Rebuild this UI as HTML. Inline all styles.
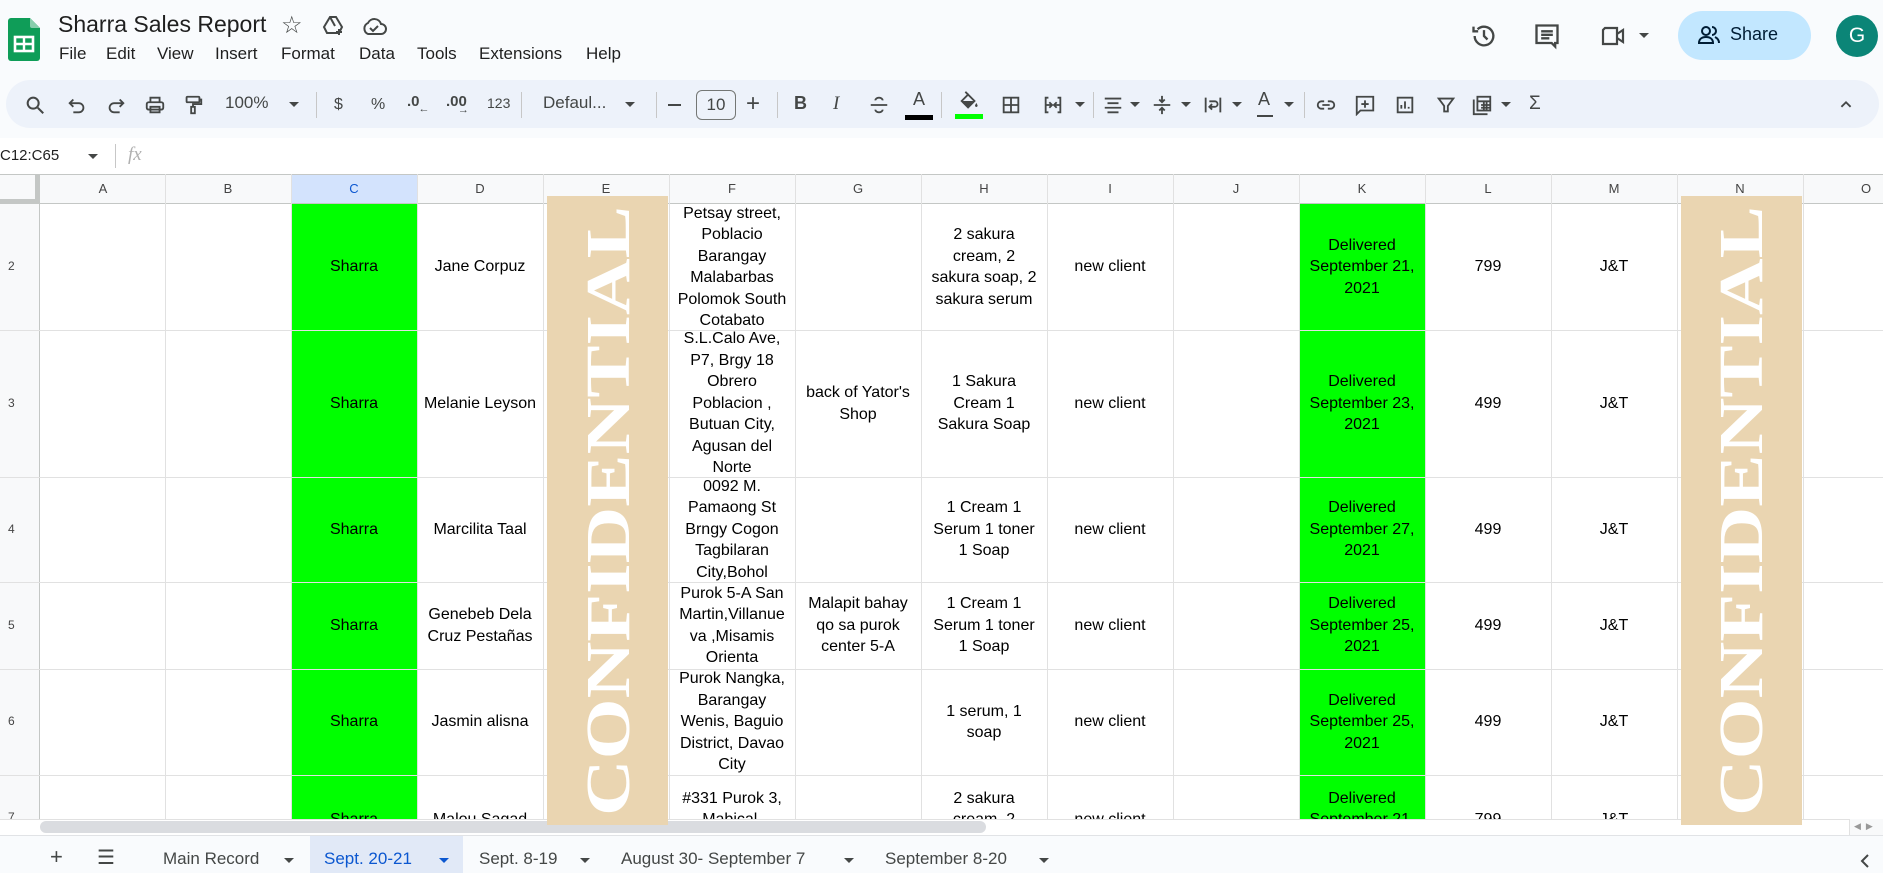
<!DOCTYPE html>
<html><head><meta charset="utf-8"><style>
*{margin:0;padding:0;box-sizing:border-box}
body{width:1883px;height:873px;overflow:hidden;background:#f9fbfd;font-family:"Liberation Sans",Arial,sans-serif;color:#1f1f1f;position:relative}
.a{position:absolute}
.t{position:absolute;white-space:nowrap}
.menu span{position:absolute;top:44px;font-size:17px;color:#1f1f1f}
.ic{position:absolute;top:94px;width:22px;height:22px}
.tb{position:absolute;top:93px;font-size:16px;color:#444746}
.sep{position:absolute;top:92px;width:1px;height:26px;background:#c7c7c7}
.dd{position:absolute;top:102px;width:0;height:0;border-left:5px solid transparent;border-right:5px solid transparent;border-top:5px solid #444746}
#grid{position:absolute;left:0;top:174px;width:1883px;height:645px;overflow:hidden;background:#fff}
.vl{position:absolute;top:0;width:1px;height:645px;background:#e1e1e1}
.hl{position:absolute;left:0;height:1px;width:1883px;background:#e1e1e1}
.ch{position:absolute;top:0;height:30px;width:126px;text-align:center;font-size:13px;line-height:30px;color:#444}
.c{position:absolute;display:flex;align-items:center;justify-content:center;text-align:center;font-size:16px;line-height:21.5px;color:#000;width:126px;padding:0 6px}
.g{background:#00ff00}
.rn{position:absolute;left:8px;font-size:12px;color:#444}
.tab{position:absolute;top:849px;font-size:17px;color:#444746}
</style></head><body>
<svg class="a" style="left:8px;top:18px" width="32" height="43" viewBox="0 0 32 43"><path d="M3 0h19l10 10v30a3 3 0 0 1-3 3H3a3 3 0 0 1-3-3V3a3 3 0 0 1 3-3z" fill="#0f9d58"/><path d="M22 0l10 10h-8a2 2 0 0 1-2-2z" fill="#87ceac"/><rect x="7" y="19" width="18" height="14" fill="none" stroke="#fff" stroke-width="2.6"/><path d="M7 26h18M16 19v14" stroke="#fff" stroke-width="2.4"/></svg>
<div class="t" style="left:58px;top:11px;font-size:23px;color:#1f1f1f">Sharra Sales Report</div>
<div class="t" style="left:281px;top:11px;font-size:24px;color:#444746">☆</div>
<svg class="a" style="left:321px;top:14px" width="24" height="24" viewBox="0 0 24 24" fill="none" stroke="#444746" stroke-width="2"><path d="M9 3h6l6 10-3 6H6l-3-6z"/><path d="M9 3l5 9"/><path d="M18 15v6M15 18h6"/></svg>
<svg class="a" style="left:361px;top:15px" width="26" height="22" viewBox="0 0 26 22" fill="none" stroke="#444746" stroke-width="2"><path d="M7 19h13a5 5 0 0 0 0-10 7 7 0 0 0-13-1 6 6 0 0 0 0 11z"/><path d="M9 13l3 3 5-5"/></svg>
<div class="menu"><span style="left:59px">File</span><span style="left:106px">Edit</span><span style="left:157px">View</span><span style="left:215px">Insert</span><span style="left:281px">Format</span><span style="left:359px">Data</span><span style="left:417px">Tools</span><span style="left:479px">Extensions</span><span style="left:586px">Help</span></div>
<svg class="a" style="left:1470px;top:22px" width="28" height="28" viewBox="0 0 24 24" fill="none" stroke="#444746" stroke-width="2"><path d="M4 12a8 8 0 1 0 2.5-5.8"/><path d="M3 4v4h4"/><path d="M12 7v5l3 3"/></svg>
<svg class="a" style="left:1533px;top:22px" width="28" height="28" viewBox="0 0 24 24" fill="none" stroke="#444746" stroke-width="2"><path d="M3 3h18v15h-2v3l-3-3H3z"/><path d="M7 8h10M7 11h10M7 14h7"/></svg>
<svg class="a" style="left:1600px;top:24px" width="28" height="24" viewBox="0 0 28 24" fill="none" stroke="#444746" stroke-width="2.2"><path d="M5 4h12v16H3V6z"/><path d="M17 10l6-4v12l-6-4"/></svg>
<div class="dd" style="left:1639px;top:33px"></div>
<div class="a" style="left:1678px;top:11px;width:133px;height:49px;border-radius:25px;background:#c2e7ff"></div>
<svg class="a" style="left:1697px;top:25px" width="24" height="20" viewBox="0 0 24 20" fill="none" stroke="#001d35" stroke-width="2"><circle cx="9" cy="6" r="4"/><path d="M2 18c0-4 3-6 7-6s7 2 7 6z"/><path d="M15 2a4 4 0 0 1 0 8M18 12c2 1 4 3 4 6"/></svg>
<div class="t" style="left:1730px;top:24px;font-size:18px;color:#001d35">Share</div>
<div class="a" style="left:1836px;top:15px;width:42px;height:42px;border-radius:50%;background:#0b8577;color:#fff;font-size:21px;text-align:center;line-height:42px">G</div>
<div class="a" style="left:6px;top:80px;width:1873px;height:48px;border-radius:24px;background:#edf2fa"></div>
<svg class="ic" style="left:24px" viewBox="0 0 24 24" fill="none" stroke="#444746" stroke-width="2.2"><circle cx="10" cy="10" r="6"/><path d="M15 15l6 6"/></svg>
<svg class="ic" style="left:66px" viewBox="0 0 24 24" fill="none" stroke="#444746" stroke-width="2"><path d="M8 6L4 10l4 4"/><path d="M4 10h10a5 5 0 0 1 0 10H8"/></svg>
<svg class="ic" style="left:105px" viewBox="0 0 24 24" fill="none" stroke="#444746" stroke-width="2"><path d="M16 6l4 4-4 4"/><path d="M20 10H10a5 5 0 0 0 0 10h6"/></svg>
<svg class="ic" style="left:144px" viewBox="0 0 24 24" fill="none" stroke="#444746" stroke-width="2"><rect x="3" y="9" width="18" height="8" rx="2"/><path d="M7 9V4h10v5M7 14h10v6H7z"/></svg>
<svg class="ic" style="left:182px" viewBox="0 0 24 24" fill="none" stroke="#444746" stroke-width="2"><rect x="5" y="3" width="14" height="6" rx="1"/><path d="M19 6h2v5h-9v3"/><rect x="10" y="14" width="4" height="7"/></svg>
<div class="tb" style="left:225px;font-size:17px">100%</div><div class="dd" style="left:289px"></div>
<div class="sep" style="left:316px"></div>
<div class="tb" style="left:334px;top:96px">$</div>
<div class="tb" style="left:371px;top:96px">%</div>
<div class="tb" style="left:407px;font-weight:bold;font-size:15px">.0<span style="font-size:11px;position:relative;top:6px;left:-1px">←</span></div>
<div class="tb" style="left:446px;font-weight:bold;font-size:15px">.00<span style="font-size:11px;position:relative;top:7px;left:-9px">→</span></div>
<div class="tb" style="left:487px;font-size:14px;top:95px">123</div>
<div class="sep" style="left:521px"></div>
<div class="tb" style="left:543px;font-size:17px">Defaul...</div><div class="dd" style="left:625px"></div>
<div class="sep" style="left:656px"></div>
<div class="a" style="left:668px;top:104px;width:13px;height:2px;background:#444746"></div>
<div class="a" style="left:696px;top:90px;width:40px;height:30px;border:1px solid #747775;border-radius:6px;text-align:center;line-height:28px;font-size:17px;color:#444746">10</div>
<div class="tb" style="left:746px;font-size:24px;top:90px">+</div>
<div class="sep" style="left:777px"></div>
<div class="tb" style="left:794px;font-weight:bold;font-size:18px">B</div>
<div class="tb" style="left:833px;font-style:italic;font-size:19px;font-family:'Liberation Serif'">I</div>
<svg class="ic" style="left:868px" viewBox="0 0 24 24" fill="none" stroke="#444746" stroke-width="2"><path d="M3 12h18M16 7a4 3 0 0 0-8 0M8 17a4 3 0 0 0 8 0"/></svg>
<div class="tb" style="left:913px;font-size:18px;top:89px">A</div><div class="a" style="left:905px;top:115px;width:28px;height:5px;background:#000"></div>
<div class="sep" style="left:941px"></div>
<svg class="ic" style="left:958px;top:90px" viewBox="0 0 24 24" fill="#444746"><path d="M4 12l7-7 7 7-7 7z" fill="none" stroke="#444746" stroke-width="2"/><path d="M5 12h12l-6 6z"/><path d="M8 2l3 3" stroke="#444746" stroke-width="2"/><path d="M20 14c-1 2-2 3-1 4a1.3 1.3 0 0 0 2 0c1-1 0-2-1-4z"/></svg>
<div class="a" style="left:955px;top:114px;width:28px;height:5px;background:#00ff00"></div>
<svg class="ic" style="left:1000px" viewBox="0 0 24 24" fill="none" stroke="#444746" stroke-width="2"><rect x="4" y="4" width="16" height="16"/><path d="M12 4v16M4 12h16"/></svg>
<svg class="ic" style="left:1042px" viewBox="0 0 24 24" fill="none" stroke="#444746" stroke-width="2"><path d="M7 4H4v16h3M17 4h3v16h-3M4 12h6M20 12h-6M8 9l3 3-3 3M16 9l-3 3 3 3"/></svg><div class="dd" style="left:1075px"></div>
<div class="sep" style="left:1093px"></div>
<svg class="ic" style="left:1102px" viewBox="0 0 24 24" fill="none" stroke="#444746" stroke-width="2"><path d="M3 5h18M6 10h12M3 15h18M6 20h12"/></svg><div class="dd" style="left:1130px"></div>
<svg class="ic" style="left:1151px" viewBox="0 0 24 24" fill="none" stroke="#444746" stroke-width="2"><path d="M3 12h18M12 2v7M9 6l3 3 3-3M12 22v-7M9 18l3-3 3 3"/></svg><div class="dd" style="left:1181px"></div>
<svg class="ic" style="left:1202px" viewBox="0 0 24 24" fill="none" stroke="#444746" stroke-width="2"><path d="M4 4v16M20 4v16M8 8h6a3 3 0 0 1 0 6h-5M11 11l-3 3 3 3"/></svg><div class="dd" style="left:1232px"></div>
<div class="tb" style="left:1258px;font-size:18px;top:89px">A</div><div class="a" style="left:1257px;top:115px;width:16px;height:2px;background:#444746"></div><div class="dd" style="left:1284px"></div>
<div class="sep" style="left:1304px"></div>
<svg class="ic" style="left:1315px" viewBox="0 0 24 24" fill="none" stroke="#444746" stroke-width="2"><path d="M10 8H7a4 4 0 0 0 0 8h3M14 8h3a4 4 0 0 1 0 8h-3M8 12h8"/></svg>
<svg class="ic" style="left:1354px" viewBox="0 0 24 24" fill="none" stroke="#444746" stroke-width="2"><path d="M3 3h18v15H7l-4 4z"/><path d="M12 7v8M8 11h8"/></svg>
<svg class="ic" style="left:1394px" viewBox="0 0 24 24" fill="none" stroke="#444746" stroke-width="2"><rect x="4" y="4" width="16" height="16"/><path d="M8 16v-4M12 16V8M16 16v-2"/></svg>
<svg class="ic" style="left:1435px" viewBox="0 0 24 24" fill="none" stroke="#444746" stroke-width="2"><path d="M4 5h16l-6 8v6h-4v-6z"/></svg>
<svg class="ic" style="left:1471px" viewBox="0 0 24 24" fill="none" stroke="#444746" stroke-width="2"><path d="M3 6v16h15"/><rect x="7" y="3" width="14" height="15"/><path d="M7 8h14M11 12h10M11 15h10M14 8v10M17 8v10"/></svg><div class="dd" style="left:1501px"></div>
<div class="tb" style="left:1529px;font-size:19px;top:93px">Σ</div>
<svg class="ic" style="left:1835px" viewBox="0 0 24 24" fill="none" stroke="#444746" stroke-width="2"><path d="M7 14l5-5 5 5"/></svg>
<div class="a" style="left:0;top:138px;width:1883px;height:36px;background:#fff"></div>
<div class="t" style="left:0;top:147px;font-size:15px;color:#1f1f1f">C12:C65</div>
<div class="dd" style="left:88px;top:154px"></div>
<div class="a" style="left:115px;top:144px;width:1px;height:24px;background:#c7c7c7"></div>
<div class="t" style="left:128px;top:144px;font-size:19px;font-style:italic;color:#b0b0b0;font-family:'Liberation Serif'">fx</div>
<div id="grid">
<div class="a" style="left:0;top:0;width:1883px;height:30px;background:#f8f9fa"></div>
<div class="a" style="left:0;top:0;width:40px;height:645px;background:#f8f9fa"></div>
<div class="a" style="left:291px;top:0;width:126px;height:30px;background:#d3e3fd"></div>
<div class="a" style="left:0;top:0;width:1883px;height:1px;background:#c4c7c5"></div>
<div class="a" style="left:0;top:29px;width:1883px;height:1px;background:#c4c7c5"></div>
<div class="a" style="left:0;top:25px;width:40px;height:5px;background:#c4c7c5"></div>
<div class="a" style="left:35px;top:0;width:5px;height:30px;background:#c4c7c5"></div>
<div class="a" style="left:39px;top:0;width:1px;height:645px;background:#c4c7c5"></div>
<div class="a g" style="left:291px;top:30px;width:126px;height:615px"></div>
<div class="a g" style="left:1299px;top:30px;width:126px;height:615px"></div>
<div class="vl" style="left:165px"></div><div class="vl" style="left:291px"></div><div class="vl" style="left:417px"></div><div class="vl" style="left:543px"></div><div class="vl" style="left:669px"></div><div class="vl" style="left:795px"></div><div class="vl" style="left:921px"></div><div class="vl" style="left:1047px"></div><div class="vl" style="left:1173px"></div><div class="vl" style="left:1299px"></div><div class="vl" style="left:1425px"></div><div class="vl" style="left:1551px"></div><div class="vl" style="left:1677px"></div><div class="vl" style="left:1803px"></div>
<div class="hl" style="top:156px"></div><div class="hl" style="top:303px"></div><div class="hl" style="top:408px"></div><div class="hl" style="top:495px"></div><div class="hl" style="top:601px"></div>
<div class="ch" style="left:40px">A</div><div class="ch" style="left:165px">B</div><div class="ch" style="left:291px;color:#0b57d0">C</div><div class="ch" style="left:417px">D</div><div class="ch" style="left:543px">E</div><div class="ch" style="left:669px">F</div><div class="ch" style="left:795px">G</div><div class="ch" style="left:921px">H</div><div class="ch" style="left:1047px">I</div><div class="ch" style="left:1173px">J</div><div class="ch" style="left:1299px">K</div><div class="ch" style="left:1425px">L</div><div class="ch" style="left:1551px">M</div><div class="ch" style="left:1677px">N</div><div class="ch" style="left:1803px">O</div>
<div class="rn" style="top:85px">2</div><div class="rn" style="top:222px">3</div><div class="rn" style="top:348px">4</div><div class="rn" style="top:444px">5</div><div class="rn" style="top:540px">6</div><div class="rn" style="top:636px">7</div>
<div class="c" style="left:291px;top:30px;height:126px">Sharra</div>
<div class="c" style="left:417px;top:30px;height:126px">Jane Corpuz</div>
<div class="c" style="left:669px;top:30px;height:126px">Petsay street, Poblacio Barangay Malabarbas Polomok South Cotabato</div>
<div class="c" style="left:921px;top:30px;height:126px">2 sakura cream, 2 sakura soap, 2 sakura serum</div>
<div class="c" style="left:1047px;top:30px;height:126px">new client</div>
<div class="c" style="left:1299px;top:30px;height:126px">Delivered September 21, 2021</div>
<div class="c" style="left:1425px;top:30px;height:126px">799</div>
<div class="c" style="left:1551px;top:30px;height:126px">J&amp;T</div>
<div class="c" style="left:291px;top:156px;height:147px">Sharra</div>
<div class="c" style="left:417px;top:156px;height:147px;padding:0 3px">Melanie Leyson</div>
<div class="c" style="left:669px;top:156px;height:147px">S.L.Calo Ave, P7, Brgy 18 Obrero Poblacion , Butuan City, Agusan del Norte</div>
<div class="c" style="left:795px;top:156px;height:147px;padding:0 3px">back of Yator's Shop</div>
<div class="c" style="left:921px;top:156px;height:147px">1 Sakura Cream 1 Sakura Soap</div>
<div class="c" style="left:1047px;top:156px;height:147px">new client</div>
<div class="c" style="left:1299px;top:156px;height:147px">Delivered September 23, 2021</div>
<div class="c" style="left:1425px;top:156px;height:147px">499</div>
<div class="c" style="left:1551px;top:156px;height:147px">J&amp;T</div>
<div class="c" style="left:291px;top:303px;height:105px">Sharra</div>
<div class="c" style="left:417px;top:303px;height:105px">Marcilita Taal</div>
<div class="c" style="left:669px;top:303px;height:105px">0092 M. Pamaong St Brngy Cogon Tagbilaran City,Bohol</div>
<div class="c" style="left:921px;top:303px;height:105px">1 Cream 1 Serum 1 toner 1 Soap</div>
<div class="c" style="left:1047px;top:303px;height:105px">new client</div>
<div class="c" style="left:1299px;top:303px;height:105px">Delivered September 27, 2021</div>
<div class="c" style="left:1425px;top:303px;height:105px">499</div>
<div class="c" style="left:1551px;top:303px;height:105px">J&amp;T</div>
<div class="c" style="left:291px;top:408px;height:87px">Sharra</div>
<div class="c" style="left:417px;top:408px;height:87px">Genebeb Dela Cruz Pestañas</div>
<div class="c" style="left:669px;top:408px;height:87px;padding:0 3px">Purok 5-A San Martin,Villanue va ,Misamis Orienta</div>
<div class="c" style="left:795px;top:408px;height:87px">Malapit bahay qo sa purok center 5-A</div>
<div class="c" style="left:921px;top:408px;height:87px">1 Cream 1 Serum 1 toner 1 Soap</div>
<div class="c" style="left:1047px;top:408px;height:87px">new client</div>
<div class="c" style="left:1299px;top:408px;height:87px">Delivered September 25, 2021</div>
<div class="c" style="left:1425px;top:408px;height:87px">499</div>
<div class="c" style="left:1551px;top:408px;height:87px">J&amp;T</div>
<div class="c" style="left:291px;top:495px;height:106px">Sharra</div>
<div class="c" style="left:417px;top:495px;height:106px">Jasmin alisna</div>
<div class="c" style="left:669px;top:495px;height:106px">Purok Nangka, Barangay Wenis, Baguio District, Davao City</div>
<div class="c" style="left:921px;top:495px;height:106px;padding:0 20px">1 serum, 1 soap</div>
<div class="c" style="left:1047px;top:495px;height:106px">new client</div>
<div class="c" style="left:1299px;top:495px;height:106px">Delivered September 25, 2021</div>
<div class="c" style="left:1425px;top:495px;height:106px">499</div>
<div class="c" style="left:1551px;top:495px;height:106px">J&amp;T</div>
<div class="c" style="left:291px;top:601px;height:90px">Sharra</div>
<div class="c" style="left:417px;top:601px;height:90px">Malou Sagad</div>
<div class="c" style="left:669px;top:601px;height:90px">#331 Purok 3, Mabical, Bacolod City</div>
<div class="c" style="left:921px;top:601px;height:90px">2 sakura cream, 2 sakura soap</div>
<div class="c" style="left:1047px;top:601px;height:90px">new client</div>
<div class="c" style="left:1299px;top:601px;height:90px">Delivered September 21, 2021</div>
<div class="c" style="left:1425px;top:601px;height:90px">799</div>
<div class="c" style="left:1551px;top:601px;height:90px">J&amp;T</div>
</div>
<svg class="a" style="left:547px;top:196px" width="121" height="629" viewBox="0 0 121 629"><rect width="121" height="629" fill="#ead5b1"/><text transform="translate(82,620) rotate(-90)" font-family="Liberation Serif" font-weight="bold" font-size="62" fill="#fff" textLength="610" lengthAdjust="spacingAndGlyphs">CONFIDENTIAL</text></svg>
<svg class="a" style="left:1681px;top:196px" width="121" height="629" viewBox="0 0 121 629"><rect width="121" height="629" fill="#ead5b1"/><text transform="translate(81,620) rotate(-90)" font-family="Liberation Serif" font-weight="bold" font-size="62" fill="#fff" textLength="610" lengthAdjust="spacingAndGlyphs">CONFIDENTIAL</text></svg>
<div class="a" style="left:0;top:819px;width:1883px;height:16px;background:#fff;border-top:1px solid #e1e1e1"></div>
<div class="a" style="left:40px;top:821px;width:946px;height:12px;border-radius:6px;background:#dadce0"></div>
<div class="a" style="left:547px;top:819px;width:121px;height:6px;background:#ead5b1"></div>
<div class="a" style="left:1681px;top:819px;width:121px;height:6px;background:#ead5b1"></div>
<div class="a" style="left:1849px;top:819px;width:34px;height:16px;border-left:1px solid #e1e1e1;background:#f8f9fa"></div>
<div class="t" style="left:1854px;top:821px;font-size:9px;color:#999">◀ &nbsp;▶</div>
<div class="a" style="left:0;top:835px;width:1883px;height:38px;background:#f9fbfd;border-top:1px solid #e1e3e6"></div>
<div class="a" style="left:310px;top:836px;width:153px;height:37px;background:#e1e9f7"></div>
<div class="tab" style="left:50px;font-size:22px;top:844px">+</div>
<div class="tab" style="left:97px;font-size:20px;top:845px">☰</div>
<div class="tab" style="left:163px">Main Record</div><div class="dd" style="left:284px;top:858px"></div>
<div class="tab" style="left:324px;color:#0b57d0">Sept. 20-21</div><div class="dd" style="left:439px;top:858px;border-top-color:#0b57d0"></div>
<div class="tab" style="left:479px">Sept. 8-19</div><div class="dd" style="left:580px;top:858px"></div>
<div class="tab" style="left:621px">August 30- September 7</div><div class="dd" style="left:844px;top:858px"></div>
<div class="tab" style="left:885px">September 8-20</div><div class="dd" style="left:1039px;top:858px"></div>
<svg class="a" style="left:1857px;top:852px" width="16" height="18" viewBox="0 0 16 18" fill="none" stroke="#444746" stroke-width="2"><path d="M11 3L5 9l6 6"/></svg>
</body></html>
